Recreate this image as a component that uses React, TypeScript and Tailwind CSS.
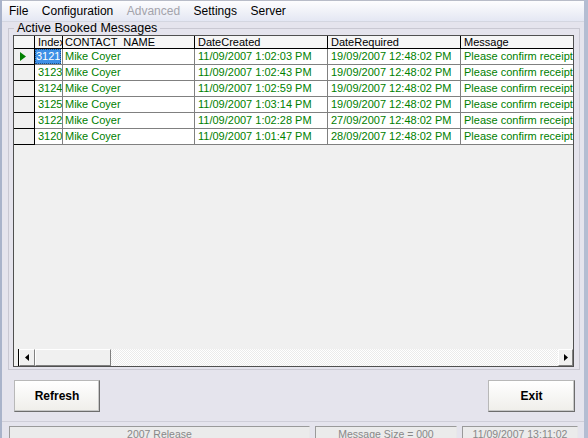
import React from "react";

type Row = { id: string; created: string; required: string };

const rows: Row[] = [
  { id: "3121", created: "11/09/2007 1:02:03 PM", required: "19/09/2007 12:48:02 PM" },
  { id: "3123", created: "11/09/2007 1:02:43 PM", required: "19/09/2007 12:48:02 PM" },
  { id: "3124", created: "11/09/2007 1:02:59 PM", required: "19/09/2007 12:48:02 PM" },
  { id: "3125", created: "11/09/2007 1:03:14 PM", required: "19/09/2007 12:48:02 PM" },
  { id: "3122", created: "11/09/2007 1:02:28 PM", required: "27/09/2007 12:48:02 PM" },
  { id: "3120", created: "11/09/2007 1:01:47 PM", required: "28/09/2007 12:48:02 PM" },
];

const menu = [
  { label: "File", disabled: false },
  { label: "Configuration", disabled: false },
  { label: "Advanced", disabled: true },
  { label: "Settings", disabled: false },
  { label: "Server", disabled: false },
];

const ArrowBtn: React.FC<{ dir: "left" | "right"; className?: string }> = ({ dir, className }) => (
  <div
    className={
      "h-full flex items-center justify-center bg-[#f0f0f0] border border-t-white border-l-white border-r-[#808080] border-b-[#808080] " +
      (className ?? "")
    }
  >
    <svg width="4" height="7" viewBox="0 0 4 7">
      {dir === "left" ? <path d="M4 0 L0 3.5 L4 7 Z" fill="#000" /> : <path d="M0 0 L4 3.5 L0 7 Z" fill="#000" />}
    </svg>
  </div>
);

const App: React.FC = () => {
  return (
    <div className="w-[588px] h-[438px] overflow-hidden bg-[#e5e4ed] flex flex-col font-['Liberation_Sans',Arial,sans-serif] text-black border-l-2 border-r-[4px] border-l-[#a9b3ca] border-r-[#b4bdd2]">
      {/* menu bar */}
      <div className="h-[22px] shrink-0 flex items-center pl-[7px] gap-[13.5px] text-[12px] bg-gradient-to-b from-[#fdfdfe] to-[#e4e7f3] border-t border-t-[#b8bcc8] border-b border-b-[#d4d6e0]">
        {menu.map((m) => (
          <span key={m.label} className={m.disabled ? "text-[#a3a3ab]" : "text-black"}>
            {m.label}
          </span>
        ))}
      </div>

      {/* group box */}
      <fieldset className="ml-[6px] w-[572px] h-[348px] border border-[#c9c8d2] pl-[4px] pr-[5px] pt-0 pb-[1px] shrink-0">
        <legend className="ml-[1px] px-[3px] text-[12.5px] leading-[13px] text-black">Active Booked Messages</legend>
        <div className="w-[561px] h-[332px] border border-[#505050] bg-[#f0f0f0] flex flex-col text-[11px] leading-[13px]">
          {/* header */}
          <div className="flex h-[13px] shrink-0 border-b border-black bg-[#f6f6f6]">
            <div className="w-[21px] shrink-0 border-r border-black" />
            <div className="w-[28px] shrink-0 border-r border-black pl-[3px] overflow-hidden whitespace-nowrap">Index</div>
            <div className="w-[132px] shrink-0 border-r border-black pl-[2px] overflow-hidden whitespace-pre">CONTACT  NAME</div>
            <div className="w-[133px] shrink-0 border-r border-black pl-[3px] overflow-hidden whitespace-nowrap">DateCreated</div>
            <div className="w-[133px] shrink-0 border-r border-black pl-[3px] overflow-hidden whitespace-nowrap">DateRequired</div>
            <div className="flex-1 pl-[3px] overflow-hidden whitespace-nowrap">Message</div>
          </div>

          {rows.map((r, i) => (
            <div key={r.id} className="flex h-[16px] shrink-0 text-[#008000] leading-[15px]">
              <div className="w-[21px] shrink-0 border-r border-b border-black bg-[#f0f0f0] flex items-center pl-[6px]">
                {i === 0 && (
                  <svg width="6" height="9" viewBox="0 0 6 9">
                    <path d="M0 0 L6 4.5 L0 9 Z" fill="#008000" />
                  </svg>
                )}
              </div>
              <div className="w-[28px] shrink-0 border-r border-b border-[#808080] bg-white overflow-hidden whitespace-nowrap">
                {i === 0 ? (
                  <div className="h-[15px] w-[26px] bg-[#3d8fe6] text-white pl-[1px] outline-1 outline-dotted outline-offset-[-1px] outline-[#1a4f8a]">
                    {r.id}
                  </div>
                ) : (
                  <div className="pl-[3px]">{r.id}</div>
                )}
              </div>
              <div className="w-[132px] shrink-0 border-r border-b border-[#808080] bg-white pl-[2px] overflow-hidden whitespace-nowrap">
                Mike Coyer
              </div>
              <div className="w-[133px] shrink-0 border-r border-b border-[#808080] bg-white pl-[3px] overflow-hidden whitespace-nowrap">
                {r.created}
              </div>
              <div className="w-[133px] shrink-0 border-r border-b border-[#808080] bg-white pl-[3px] overflow-hidden whitespace-nowrap">
                {r.required}
              </div>
              <div className="flex-1 border-b border-[#808080] bg-white pl-[3px] overflow-hidden whitespace-nowrap">
                Please confirm receipt of booking
              </div>
            </div>
          ))}

          <div className="flex-1" />

          {/* horizontal scrollbar */}
          <div className="h-[17px] shrink-0 flex pl-[4px]">
            <div className="w-px bg-black" />
            <ArrowBtn dir="left" className="w-[16px]" />
            <div className="w-[76px] h-full bg-[#f0f0f0] border border-t-white border-l-white border-r-[#808080] border-b-[#808080]" />
            <div className="flex-1 h-full bg-[repeating-conic-gradient(#ffffff_0_25%,#ebebeb_0_50%)] bg-[length:2px_2px]" />
            <ArrowBtn dir="right" className="w-[15px]" />
          </div>
        </div>
      </fieldset>

      {/* buttons */}
      <div className="flex justify-between mt-[10px] pl-[12px] pr-[9px] shrink-0">
        <button className="w-[86px] h-[32px] text-[12px] font-bold bg-gradient-to-b from-white to-[#efeeea] border border-[#b8b8b8] border-r-[#6d6d6d] border-b-[#6d6d6d] shadow-[inset_-1px_-1px_0_#c8c8c8]">
          Refresh
        </button>
        <button className="w-[87px] h-[32px] text-[12px] font-bold bg-gradient-to-b from-white to-[#efeeea] border border-[#b8b8b8] border-r-[#6d6d6d] border-b-[#6d6d6d] shadow-[inset_-1px_-1px_0_#c8c8c8]">
          Exit
        </button>
      </div>

      {/* status bar */}
      <div className="mt-[9px] h-px bg-[#cfced8] shrink-0" />
      <div className="mt-[4px] flex gap-[5px] pl-[7px] shrink-0 text-[10.5px] text-[#888888]">
        <div className="w-[301px] h-[18px] border border-[#9a9a9a] border-r-[#e8e8e8] border-b-[#e8e8e8] bg-[#ebebeb] text-center leading-[15px]">
          2007 Release
        </div>
        <div className="w-[142px] h-[18px] border border-[#9a9a9a] border-r-[#e8e8e8] border-b-[#e8e8e8] bg-[#ebebeb] text-center leading-[15px]">
          Message Size = 000
        </div>
        <div className="w-[116px] h-[18px] border border-[#9a9a9a] border-r-[#e8e8e8] border-b-[#e8e8e8] bg-[#ebebeb] text-center leading-[15px]">
          11/09/2007 13:11:02
        </div>
      </div>
    </div>
  );
};

export default App;
